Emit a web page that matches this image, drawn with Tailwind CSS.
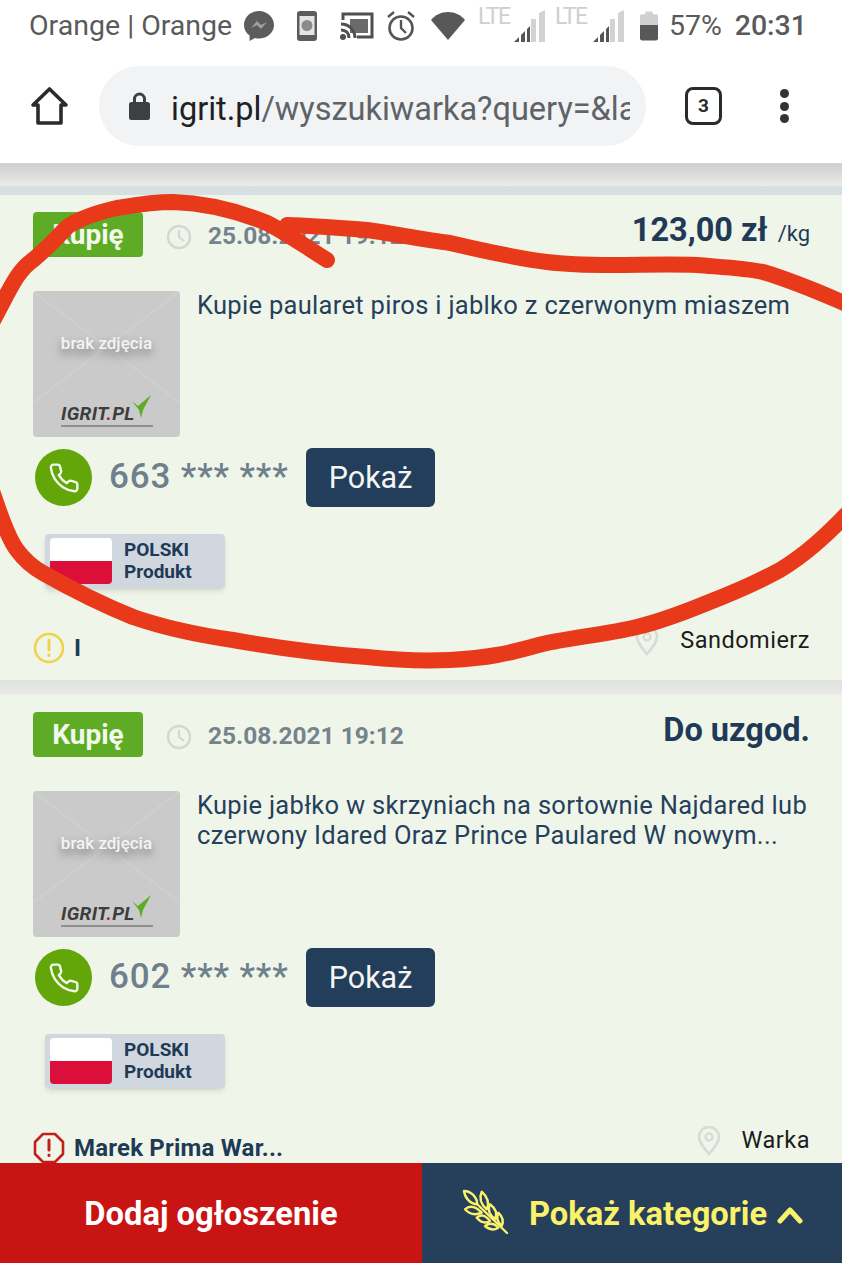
<!DOCTYPE html>
<html lang="pl">
<head>
<meta charset="UTF-8" />
<meta name="viewport" content="width=device-width, initial-scale=1.0" />
<title>igrit.pl</title>
<script src="https://cdn.jsdelivr.net/npm/@tailwindcss/browser@4"></script>
</head>
<body class="font-['Roboto',sans-serif] bg-white">
<div class="relative w-[842px] h-[1263px] overflow-hidden flex flex-col">

    <!-- Status bar -->
    <div class="h-[52px] shrink-0 flex items-center pl-[29px] pr-[35px] text-[#5a5a5a] text-[28.500px] bg-white">
        <span class="w-[214px] shrink-0 whitespace-nowrap">Orange | Orange</span>
        <svg class="w-[32px] h-[32px] shrink-0" viewBox="0 0 32 32"><path fill="#5c5c5c" d="M16 1C7.600 1 1 7.200 1 15c0 4.400 2 8 5.600 10.600V31l5.300-3c1.300.4 2.700.5 4.100.5 8.400 0 15-6 15-13.500S24.400 1 16 1z"/><path fill="#a0a0a0" d="M8 18l6-7 4 4 6-3-6 7-4-4z"/></svg>
        <svg class="w-[24px] h-[32px] ml-[20px] shrink-0" viewBox="0 0 24 32"><rect x="2" y="1" width="20" height="30" rx="3" fill="#5c5c5c"/><rect x="4.500" y="6" width="15" height="19" fill="#e4e4e4"/><circle cx="12" cy="15.500" r="5.500" fill="#8a8a8a"/></svg>
        <svg class="w-[34px] h-[30px] ml-[21px] shrink-0" viewBox="0 0 34 30"><path fill="none" stroke="#4f4f4f" stroke-width="3" d="M3 9V3h29v23H17"/><rect x="10" y="8" width="18" height="14" fill="#6a6a6a"/><path fill="none" stroke="#4f4f4f" stroke-width="3" d="M1 13c8 0 14 6 14 14M1 19c5 0 8 3 8 8"/><circle cx="3" cy="26" r="3" fill="#4f4f4f"/></svg>
        <svg class="w-[30px] h-[32px] ml-[12px] shrink-0" viewBox="0 0 30 32"><circle cx="15" cy="18" r="11.500" fill="none" stroke="#555" stroke-width="2.600"/><path fill="none" stroke="#555" stroke-width="2.400" d="M15 10v8l5 5M2 7l6-5M28 7l-6-5"/></svg>
        <svg class="w-[36px] h-[30px] ml-[14px] shrink-0" viewBox="0 0 36 30"><path fill="#585858" d="M18 29L1 9C5 4 11 1 18 1s13 3 17 8z"/></svg>
        <span class="w-[35px] h-[24px] ml-[12px] self-start mt-[5px] shrink-0 text-[#cfcfcf] text-[23px] leading-[24px] tracking-[-1.500px] whitespace-nowrap">LTE</span>
        <svg class="w-[34px] h-[32px] shrink-0" viewBox="0 0 34 32"><path fill="#d2d2d2" d="M26 3l6-3v32h-6zM18 9h5v23h-5z"/><path fill="#555" d="M1 32l5-5v5zM8 25l4-4v11H8zM14 19l3-3v16h-3z"/></svg>
        <span class="w-[35px] h-[24px] ml-[8px] self-start mt-[5px] shrink-0 text-[#cfcfcf] text-[23px] leading-[24px] tracking-[-1.500px] whitespace-nowrap">LTE</span>
        <svg class="w-[34px] h-[32px] ml-[2px] shrink-0" viewBox="0 0 34 32"><path fill="#d2d2d2" d="M26 3l6-3v32h-6zM18 9h5v23h-5z"/><path fill="#555" d="M1 32l5-5v5zM8 25l4-4v11H8zM14 19l3-3v16h-3z"/></svg>
        <svg class="w-[18px] h-[32px] ml-[14px] shrink-0" viewBox="0 0 20 32"><path fill="#d0d0d0" d="M6 0h8v3h4a2 2 0 0 1 2 2v11H0V5a2 2 0 0 1 2-2h4z"/><path fill="#585858" d="M0 15h20v15a2 2 0 0 1-2 2H2a2 2 0 0 1-2-2z"/></svg>
        <span class="ml-[11px] whitespace-nowrap">57%</span>
        <span class="ml-auto whitespace-nowrap font-medium">20:31</span>
    </div>

    <!-- Browser toolbar -->
    <div class="h-[112px] shrink-0 bg-white flex items-center pl-[30px] pr-[53px] pb-[3px] border-b border-[#d4d4d4]">
        <svg class="w-[39px] h-[40px] shrink-0" viewBox="0 0 39 40"><path fill="none" stroke="#2b2b2b" stroke-width="3.600" stroke-linejoin="round" d="M19.500 3L3 19h5v18h23V19h5z"/></svg>
        <div class="ml-[30px] w-[547px] h-[80px] rounded-[40px] bg-[#f1f3f4] flex items-center pl-[29px] pr-[16px] shrink-0 overflow-hidden">
            <svg class="w-[23px] h-[30px] shrink-0" viewBox="0 0 23 30"><path fill="none" stroke="#3c4043" stroke-width="3" d="M6.500 12V8a5 5 0 0 1 10 0v4"/><rect x="1" y="11" width="21" height="18" rx="2.500" fill="#3c4043"/></svg>
            <span class="ml-[20px] pt-[6px] text-[32.500px] text-[#5f6368] whitespace-nowrap overflow-hidden"><span class="text-[#202124]">igrit.pl</span>/wyszukiwarka?query=&amp;la</span>
        </div>
        <div class="ml-[39px] w-[37px] h-[38px] rounded-[8px] border-[3.500px] border-[#2b2b2b] flex items-center justify-center text-[#2b2b2b] text-[19px] font-bold shrink-0">3</div>
        <div class="ml-auto flex flex-col gap-[3.500px]">
            <span class="w-[9px] h-[9px] rounded-full bg-[#333]"></span>
            <span class="w-[9px] h-[9px] rounded-full bg-[#333]"></span>
            <span class="w-[9px] h-[9px] rounded-full bg-[#333]"></span>
        </div>
    </div>

    <!-- Listing -->
    <div class="flex-1 min-h-0 overflow-hidden bg-[#e6e8e6]">
        <div class="h-[22px] bg-gradient-to-b from-[#cfcfcf] to-[#ebebe9]"></div>
        <div class="h-[9px] bg-[#d6e0e2]"></div>

        <!-- Card 1 -->
        <article class="h-[485px] bg-[#eff6e9] pl-[33px] pr-[32px] pt-[17px] flex flex-col">
            <div class="flex items-center h-[45px]">
                <span class="w-[110px] h-[45px] pt-[1px] rounded-[4px] bg-[#5eac26] text-[#f3f8ec] text-[28px] font-bold flex items-center justify-center">Kupię</span>
                <svg class="w-[26px] h-[26px] ml-[23px] mt-[4px]" viewBox="0 0 26 26"><circle cx="13" cy="13" r="11" fill="none" stroke="#d3d8d3" stroke-width="2.400"/><path fill="none" stroke="#d3d8d3" stroke-width="2.200" d="M13 6v7l5 4"/></svg>
                <span class="ml-[16px] mt-[4px] text-[24.500px] font-bold text-[#75838d] whitespace-nowrap">25.08.2021 19:12</span>
                <span class="ml-auto text-[#1f3a56] text-[32.500px] font-bold whitespace-nowrap -mt-[9px]">123,00 zł <span class="ml-[2px] text-[22px] font-normal">/kg</span></span>
            </div>
            <div class="flex mt-[34px] h-[146px]">
                <div class="relative w-[147px] h-[146px] shrink-0 rounded-[4px] bg-[#cacaca] overflow-hidden flex flex-col items-center">
                    <svg class="absolute inset-0 w-[147px] h-[146px]" viewBox="0 0 147 146"><path fill="none" stroke="#cfcfcf" stroke-width="2" d="M0 0l147 112M147 0L0 112"/></svg>
                    <span class="relative mt-[40px] text-[17px] font-medium text-[#f4f4f4] [text-shadow:0_5px_9px_#777] whitespace-nowrap">brak zdjęcia</span>
                    <div class="absolute left-[28px] top-[112px] flex items-start">
                        <span class="text-[19px] leading-[22px] font-bold italic tracking-[.3px] text-[#3d3d3d]">IGRIT<span class="text-[#c8102e]">.</span>PL</span>
                        <svg class="w-[22px] h-[24px] -ml-[4px] -mt-[8px]" viewBox="0 0 22 24"><path fill="#5eac26" d="M1 6l6 5 13-11-8 15-2 8-2-8z"/></svg>
                    </div>
                    <span class="absolute left-[28px] top-[134px] w-[92px] h-[2px] bg-[#8f8f8f]"></span>
                </div>
                <p class="ml-[17px] -mt-[1px] text-[25.500px] leading-[30px] tracking-[.3px] text-[#263f5b]">Kupie paularet piros i jablko z czerwonym miaszem</p>
            </div>
            <div class="flex items-center mt-[11px] h-[59px]">
                <span class="w-[57px] h-[57px] ml-[2px] rounded-full bg-[#62a60a] flex items-center justify-center shrink-0">
                    <svg class="w-[32px] h-[32px]" viewBox="0 0 24 24"><path fill="none" stroke="#f3f8ec" stroke-width="1.800" stroke-linejoin="round" d="M22 16.920v3a2 2 0 0 1-2.180 2 19.790 19.790 0 0 1-8.630-3.070 19.500 19.500 0 0 1-6-6 19.790 19.790 0 0 1-3.070-8.670A2 2 0 0 1 4.110 2h3a2 2 0 0 1 2 1.720 12.840 12.840 0 0 0 .7 2.810 2 2 0 0 1-.45 2.110L8.090 9.910a16 16 0 0 0 6 6l1.270-1.270a2 2 0 0 1 2.110-.45 12.840 12.840 0 0 0 2.810.7A2 2 0 0 1 22 16.920z"/></svg>
                </span>
                <span class="ml-[17px] w-[178px] text-[35px] font-medium tracking-[.85px] text-[#6f7f8c] whitespace-nowrap">663 *** ***</span>
                <button class="ml-[19px] w-[129px] h-[59px] rounded-[6px] bg-[#233e5a] text-[#f3f6f3] text-[30.500px]">Pokaż</button>
            </div>
            <div class="ml-[12px] mt-[27px] w-[180px] h-[54px] rounded-[4px] bg-[#d0d7de] shadow-md flex items-center pl-[5px]">
                <span class="w-[62px] h-[46px] rounded-[4px] overflow-hidden flex flex-col shrink-0">
                    <span class="h-[23px] bg-white"></span>
                    <span class="h-[23px] bg-[#dc0e3a]"></span>
                </span>
                <span class="ml-[12px] text-[#1f3a56] text-[19px] leading-[22px] font-bold">POLSKI<br />Produkt</span>
            </div>
            <div class="flex justify-between items-start mt-[35px]">
                <div class="flex items-center h-[32px] mt-[9px]">
                    <svg class="w-[32px] h-[32px]" viewBox="0 0 32 32"><circle cx="16" cy="16" r="14" fill="none" stroke="#f1d34a" stroke-width="2.600"/><path fill="none" stroke="#f1d34a" stroke-width="3" stroke-linecap="round" d="M16 8v10M16 23v.500"/></svg>
                    <span class="ml-[9px] text-[#1f3a56] text-[24px] font-bold">I</span>
                </div>
                <div class="flex items-center">
                    <svg class="w-[26px] h-[30px]" viewBox="0 0 26 30"><path fill="none" stroke="#d7dcd7" stroke-width="2.600" d="M13 28C7 21 3 16 3 11a10 10 0 0 1 20 0c0 5-4 10-10 17z"/><circle cx="13" cy="11" r="3.500" fill="none" stroke="#d7dcd7" stroke-width="2.400"/></svg>
                    <span class="ml-[20px] text-[23.500px] text-[#1c1c1c] tracking-[.5px] whitespace-nowrap">Sandomierz</span>
                </div>
            </div>
        </article>

        <div class="h-[15px] bg-gradient-to-b from-[#dfe1df] to-[#ebebe9]"></div>

        <!-- Card 2 -->
        <article class="h-[485px] bg-[#eff6e9] pl-[33px] pr-[32px] pt-[17px] flex flex-col">
            <div class="flex items-center h-[45px]">
                <span class="w-[110px] h-[45px] pt-[1px] rounded-[4px] bg-[#5eac26] text-[#f3f8ec] text-[28px] font-bold flex items-center justify-center">Kupię</span>
                <svg class="w-[26px] h-[26px] ml-[23px] mt-[4px]" viewBox="0 0 26 26"><circle cx="13" cy="13" r="11" fill="none" stroke="#d3d8d3" stroke-width="2.400"/><path fill="none" stroke="#d3d8d3" stroke-width="2.200" d="M13 6v7l5 4"/></svg>
                <span class="ml-[16px] mt-[4px] text-[24.500px] font-bold text-[#75838d] whitespace-nowrap">25.08.2021 19:12</span>
                <span class="ml-auto text-[#1f3a56] text-[32.500px] font-bold whitespace-nowrap -mt-[9px]">Do uzgod.</span>
            </div>
            <div class="flex mt-[34px] h-[146px]">
                <div class="relative w-[147px] h-[146px] shrink-0 rounded-[4px] bg-[#cacaca] overflow-hidden flex flex-col items-center">
                    <svg class="absolute inset-0 w-[147px] h-[146px]" viewBox="0 0 147 146"><path fill="none" stroke="#cfcfcf" stroke-width="2" d="M0 0l147 112M147 0L0 112"/></svg>
                    <span class="relative mt-[40px] text-[17px] font-medium text-[#f4f4f4] [text-shadow:0_5px_9px_#777] whitespace-nowrap">brak zdjęcia</span>
                    <div class="absolute left-[28px] top-[112px] flex items-start">
                        <span class="text-[19px] leading-[22px] font-bold italic tracking-[.3px] text-[#3d3d3d]">IGRIT<span class="text-[#c8102e]">.</span>PL</span>
                        <svg class="w-[22px] h-[24px] -ml-[4px] -mt-[8px]" viewBox="0 0 22 24"><path fill="#5eac26" d="M1 6l6 5 13-11-8 15-2 8-2-8z"/></svg>
                    </div>
                    <span class="absolute left-[28px] top-[134px] w-[92px] h-[2px] bg-[#8f8f8f]"></span>
                </div>
                <p class="ml-[17px] -mt-[1px] text-[25.500px] leading-[30px] tracking-[.3px] text-[#263f5b]">Kupie jabłko w skrzyniach na sortownie Najdared lub czerwony Idared Oraz Prince Paulared W nowym...</p>
            </div>
            <div class="flex items-center mt-[11px] h-[59px]">
                <span class="w-[57px] h-[57px] ml-[2px] rounded-full bg-[#62a60a] flex items-center justify-center shrink-0">
                    <svg class="w-[32px] h-[32px]" viewBox="0 0 24 24"><path fill="none" stroke="#f3f8ec" stroke-width="1.800" stroke-linejoin="round" d="M22 16.920v3a2 2 0 0 1-2.180 2 19.790 19.790 0 0 1-8.630-3.070 19.500 19.500 0 0 1-6-6 19.790 19.790 0 0 1-3.070-8.670A2 2 0 0 1 4.110 2h3a2 2 0 0 1 2 1.720 12.840 12.840 0 0 0 .7 2.810 2 2 0 0 1-.45 2.110L8.090 9.910a16 16 0 0 0 6 6l1.270-1.270a2 2 0 0 1 2.110-.45 12.840 12.840 0 0 0 2.810.7A2 2 0 0 1 22 16.920z"/></svg>
                </span>
                <span class="ml-[17px] w-[178px] text-[35px] font-medium tracking-[.85px] text-[#6f7f8c] whitespace-nowrap">602 *** ***</span>
                <button class="ml-[19px] w-[129px] h-[59px] rounded-[6px] bg-[#233e5a] text-[#f3f6f3] text-[30.500px]">Pokaż</button>
            </div>
            <div class="ml-[12px] mt-[27px] w-[180px] h-[54px] rounded-[4px] bg-[#d0d7de] shadow-md flex items-center pl-[5px]">
                <span class="w-[62px] h-[46px] rounded-[4px] overflow-hidden flex flex-col shrink-0">
                    <span class="h-[23px] bg-white"></span>
                    <span class="h-[23px] bg-[#dc0e3a]"></span>
                </span>
                <span class="ml-[12px] text-[#1f3a56] text-[19px] leading-[22px] font-bold">POLSKI<br />Produkt</span>
            </div>
            <div class="flex justify-between items-start mt-[35px]">
                <div class="flex items-center h-[32px] mt-[9px]">
                    <svg class="w-[32px] h-[32px]" viewBox="0 0 32 32"><path fill="none" stroke="#c1201c" stroke-width="2.600" stroke-linejoin="round" d="M10 2h12l8 8v12l-8 8H10l-8-8V10z"/><path fill="none" stroke="#c1201c" stroke-width="3" stroke-linecap="round" d="M16 8v10M16 23v.500"/></svg>
                    <span class="ml-[9px] text-[#1f3a56] text-[24px] tracking-[.2px] font-bold whitespace-nowrap">Marek Prima War...</span>
                </div>
                <div class="flex items-center">
                    <svg class="w-[26px] h-[30px]" viewBox="0 0 26 30"><path fill="none" stroke="#d7dcd7" stroke-width="2.600" d="M13 28C7 21 3 16 3 11a10 10 0 0 1 20 0c0 5-4 10-10 17z"/><circle cx="13" cy="11" r="3.500" fill="none" stroke="#d7dcd7" stroke-width="2.400"/></svg>
                    <span class="ml-[20px] text-[23.500px] text-[#1c1c1c] tracking-[.5px] whitespace-nowrap">Warka</span>
                </div>
            </div>
        </article>
    </div>

    <!-- Bottom actions -->
    <div class="h-[100px] shrink-0 flex">
        <div class="w-[422px] pt-[3px] bg-[#c91414] text-white text-[32.700px] font-bold flex items-center justify-center">Dodaj ogłoszenie</div>
        <div class="flex-1 pt-[3px] bg-[#263f5b] text-[#fbf26c] text-[32.700px] font-bold flex items-center pl-[40px]">
            <svg class="w-[48px] h-[48px] shrink-0 -mt-[6px]" viewBox="0 0 48 48"><g fill="none" stroke="#fbf26c" stroke-width="2.400" stroke-linejoin="round" stroke-linecap="round"><path d="M15 16l30 29"/><path d="M2 3C9 3 15 9 15.300 16.300 8 16 3 10 2 3zM19.700 3.700Q15.500 13 24.700 21.300 29 12 19.700 3.700zM28 16.300Q24 24 33 31.300 37 23 28 16.300zM36.300 24.700Q33 32 39.700 38 43 31 36.300 24.700zM3 21.300Q10 15 19.700 24.700 10 29 3 21.300zM14.700 29.700Q21 24 28 33 21 37 14.700 29.700zM23 38Q30 33 36.300 39.700 30 44 23 38z"/></g></svg>
            <span class="ml-[19px] whitespace-nowrap">Pokaż kategorie</span>
            <svg class="w-[26px] h-[18px] ml-[10px] shrink-0" viewBox="0 0 26 18"><path fill="none" stroke="#fbf26c" stroke-width="5" stroke-linecap="round" stroke-linejoin="round" d="M3 15l10-11 10 11"/></svg>
        </div>
    </div>

    <!-- Hand-drawn marker over the first card -->
    <svg class="absolute left-0 top-0 w-[842px] h-[1263px] pointer-events-none" viewBox="0 0 842 1263">
        <g fill="none" stroke="#e8391b" stroke-width="16" stroke-linecap="round" stroke-linejoin="round">
            <path d="M327 260C300 243 285 232 267 223C240 212 205 203 173 202C150 202 135 205 117 208C95 213 80 218 67 227C55 240 45 250 33 260C15 272 8 295 -15 335"/>
            <path d="M287 225C315 226 340 228 367 230C395 234 425 240 450 243C480 250 515 258 547 262C570 265 590 265 613 265C640 265 670 264 697 265C720 267 745 268 763 272C790 280 815 290 860 310"/>
            <path d="M-15 470C0 515 8 538 17 550C25 561 34 568 43 573C73 590 103 605 133 617C165 628 198 635 233 640C278 648 325 654 367 657C395 660 425 661 450 660C468 659 480 658 497 655C515 652 530 647 547 643C575 637 608 634 637 627C662 621 685 612 707 603C733 593 758 582 780 570C803 556 825 538 860 500"/>
        </g>
    </svg>
</div>
</body>
</html>
